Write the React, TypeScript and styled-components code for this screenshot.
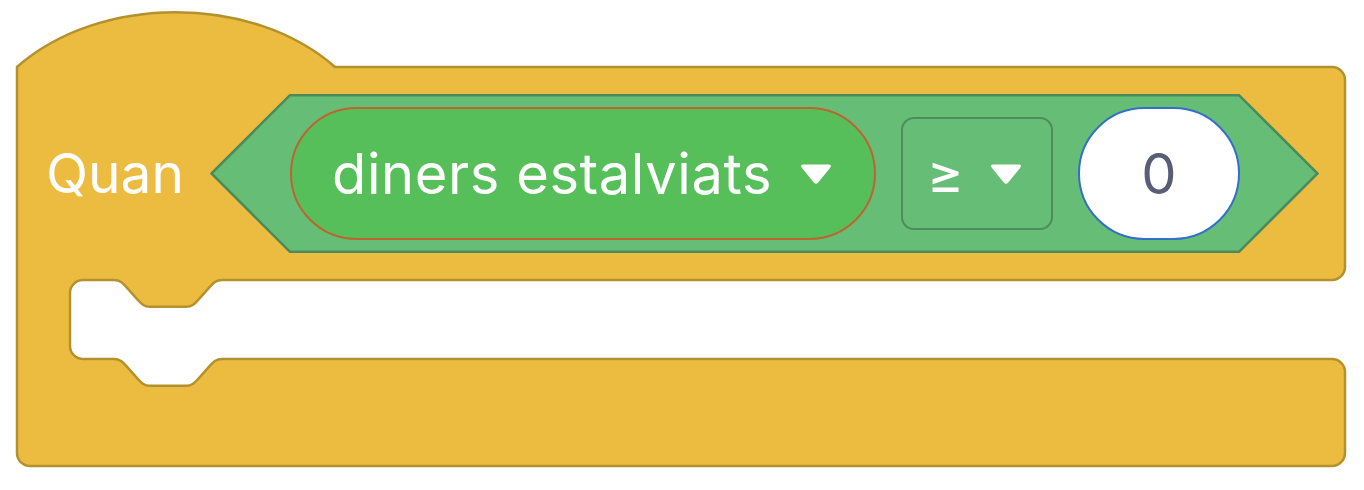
import React from "react";
import styled, { createGlobalStyle } from "styled-components";

const GlobalStyle = createGlobalStyle`
  html, body { margin: 0; padding: 0; background: #ffffff; }
  body { font-family: "Inter", "Noto Sans", sans-serif; }
`;

const Canvas = styled.div`
  position: relative;
  width: 1364px;
  height: 490px;
  overflow: hidden;
  background: #ffffff;
`;

const BlockShape = styled.svg`
  position: absolute;
  inset: 0;
  z-index: 0;
`;

const Content = styled.div`
  position: relative;
  z-index: 1;
  display: flex;
  flex-direction: column;
  padding: 94px 0 0 46px;
`;

const HeaderRow = styled.div`
  display: flex;
  align-items: center;
  height: 159px;
`;

const Label = styled.span`
  width: 164px;
  color: #ffffff;
  font-size: 55px;
  font-weight: 400;
  line-height: 1;
  white-space: nowrap;
`;

const BooleanSlot = styled.div`
  position: relative;
  box-sizing: border-box;
  width: 1109px;
  height: 159px;
  display: flex;
  align-items: center;
  gap: 25px;
  padding: 0 79px 0 80px;
`;

const SlotShape = styled.svg`
  position: absolute;
  inset: 0;
  z-index: 0;
`;

const Field = styled.div<{ $w: number; $h: number; $radius: number; $fill: string; $stroke: string }>`
  position: relative;
  z-index: 1;
  box-sizing: border-box;
  width: ${(p) => p.$w}px;
  height: ${(p) => p.$h}px;
  border-radius: ${(p) => p.$radius}px;
  background: ${(p) => p.$fill};
  border: 2.5px solid ${(p) => p.$stroke};
  display: flex;
  align-items: center;
`;

const VariablePill = styled(Field)`
  padding: 0 41px 0 40px;
  justify-content: space-between;
`;

const OperatorMenu = styled(Field)`
  padding: 0 28px 0 24px;
  justify-content: space-between;
`;

const NumberOval = styled(Field)`
  justify-content: center;
`;

const FieldText = styled.span<{ $color: string; $spacing?: number }>`
  color: ${(p) => p.$color};
  font-size: 56px;
  line-height: 1;
  letter-spacing: ${(p) => p.$spacing ?? 0}px;
  white-space: nowrap;
`;

const Arrow = () => (
  <svg width="34" height="22" viewBox="0 0 34 22" aria-hidden="true">
    <path
      d="M4.5 1.5 H29.5 Q33.5 1.5 31 5 L19.2 19.6 Q17 22 14.8 19.6 L3 5 Q0.5 1.5 4.5 1.5 Z"
      fill="#ffffff"
    />
  </svg>
);

const blockPath = [
  "M17,67",
  "c 83,-73 235,-73 318,0",
  "H1332 a13,13 0 0 1 13,13",
  "V267 a13,13 0 0 1 -13,13",
  "H222",
  "c -6,0 -9,3.4 -12,6.7 l -12,13.4 c -3,3.4 -6,6.7 -12,6.7 h -36 c -6,0 -9,-3.4 -12,-6.7 l -12,-13.4 c -3,-3.4 -6,-6.7 -12,-6.7",
  "H83 a13,13 0 0 0 -13,13",
  "V346 a13,13 0 0 0 13,13",
  "H114",
  "c 6,0 9,3.4 12,6.7 l 12,13.4 c 3,3.4 6,6.7 12,6.7 h 36 c 6,0 9,-3.4 12,-6.7 l 12,-13.4 c 3,-3.4 6,-6.7 12,-6.7",
  "H1332 a13,13 0 0 1 13,13",
  "V453 a13,13 0 0 1 -13,13",
  "H30 a13,13 0 0 1 -13,-13",
  "Z",
].join(" ");

export default function App() {
  return (
    <>
      <GlobalStyle />
      <Canvas>
        <BlockShape width="1364" height="490" viewBox="0 0 1364 490" aria-hidden="true">
          <path d={blockPath} fill="#ECBC40" stroke="#B3922E" strokeWidth="2.5" strokeLinejoin="round" />
        </BlockShape>
        <Content>
          <HeaderRow>
            <Label>Quan</Label>
            <BooleanSlot>
              <SlotShape width="1109" height="159" viewBox="0 0 1109 159" aria-hidden="true">
                <path
                  d="M1.5,79.5 L80,1.2 L1029,1.2 L1107.5,79.5 L1029,157.8 L80,157.8 Z"
                  fill="#66BE76"
                  stroke="#4C8A5B"
                  strokeWidth="2.5"
                />
              </SlotShape>
              <VariablePill $w={586} $h={133} $radius={66.5} $fill="#57BF5A" $stroke="#BD6431">
                <FieldText $color="#ffffff" $spacing={0.6}>diners estalviats</FieldText>
                <Arrow />
              </VariablePill>
              <OperatorMenu $w={152} $h={113} $radius={13} $fill="transparent" $stroke="#4E8C5C">
                <FieldText $color="#ffffff">≥</FieldText>
                <Arrow />
              </OperatorMenu>
              <NumberOval $w={162} $h={133} $radius={66.5} $fill="#ffffff" $stroke="#336FC8">
                <FieldText $color="#575E75">0</FieldText>
              </NumberOval>
            </BooleanSlot>
          </HeaderRow>
        </Content>
      </Canvas>
    </>
  );
}
